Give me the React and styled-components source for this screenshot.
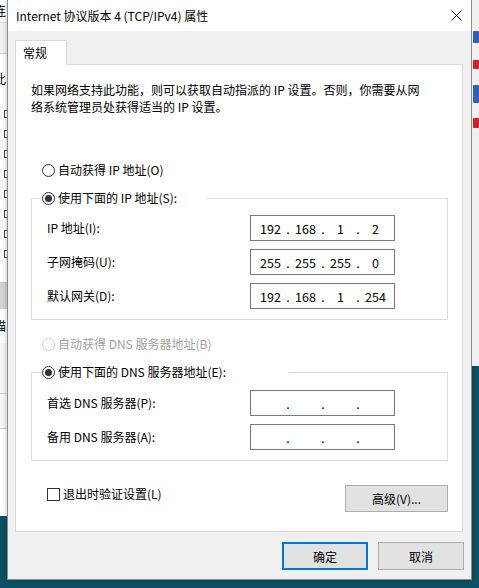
import React from 'react';
import styled, { createGlobalStyle } from 'styled-components';

const GlobalStyle = createGlobalStyle`
  html, body { margin: 0; padding: 0; }
  body {
    font-family: "Noto Sans CJK SC", "Noto Sans", sans-serif;
    font-size: 12px;
    color: #000;
  }
`;

const Desktop = styled.div`
  width: 479px;
  height: 588px;
  overflow: hidden;
  background: #0b5263;
  display: grid;
  grid-template-columns: 7px 465px 7px;
  grid-template-rows: 580px;
`;

const SideWindow = styled.div`
  height: ${p => p.$height}px;
  background: ${p => p.$bg};
  display: flex;
  flex-direction: column;
  overflow: hidden;
`;

const SideChar = styled.div`
  height: ${p => p.$h}px;
  line-height: ${p => p.$h}px;
  margin-left: -6px;
  border-bottom: ${p => (p.$line ? '1px solid #dadada' : 'none')};
`;

const SideBox = styled.div`
  width: 6px;
  height: 8px;
  margin: 6px 0 6px 4px;
  box-sizing: border-box;
  border: 1px solid #555;
  border-right: none;
`;

const SideBar = styled.div`
  height: ${p => p.$h}px;
  background: ${p => p.$bg};
  border-bottom: ${p => (p.$line ? '1px solid #cfcfcf' : 'none')};
`;

const SideIcon = styled.div`
  width: 6px;
  height: ${p => p.$h}px;
  margin: ${p => p.$m};
  background: ${p => p.$bg};
  border-radius: 1px;
`;

const Dialog = styled.div`
  display: flex;
  flex-direction: column;
  background: #f0f0f0;
  border: 1px solid #8c8c8c;
  border-top: none;
  box-sizing: border-box;
  box-shadow: 0 0 6px rgba(0, 0, 0, 0.25);
`;

const TitleBar = styled.div`
  height: 31px;
  flex: none;
  background: #fff;
  display: flex;
  align-items: center;
  justify-content: space-between;
  padding: 0 9px 0 8px;
`;

const Title = styled.span`
  font-size: 12px;
  line-height: 16px;
`;

const Body = styled.div`
  padding: 9px 8px 9px 7px;
  display: flex;
  flex-direction: column;
`;

const Tab = styled.div`
  position: relative;
  z-index: 1;
  width: 52px;
  height: 25px;
  box-sizing: border-box;
  margin-bottom: -1px;
  padding: 4px 0 0 7px;
  background: #fff;
  border: 1px solid #d9d9d9;
  border-bottom: none;
  line-height: 16px;
`;

const Panel = styled.div`
  height: 468px;
  box-sizing: border-box;
  background: #fff;
  border: 1px solid #d9d9d9;
  padding: 16px 14px 0 15px;
  display: flex;
  flex-direction: column;
`;

const Description = styled.p`
  margin: 0;
  line-height: 17px;
`;

const RadioRow = styled.label`
  display: flex;
  align-items: center;
  gap: 3px;
  height: 16px;
  line-height: 16px;
  margin: ${p => p.$mt}px 0 0 11px;
  color: ${p => (p.$disabled ? '#a0a0a0' : '#000')};
`;

const RadioCircle = styled.span`
  width: 13px;
  height: 13px;
  box-sizing: border-box;
  border-radius: 50%;
  border: 1px solid ${p => (p.$disabled ? '#cccccc' : '#333')};
  background: #fff;
  display: inline-flex;
  align-items: center;
  justify-content: center;
  &::after {
    content: '';
    width: 7px;
    height: 7px;
    border-radius: 50%;
    background: #333;
    display: ${p => (p.$checked ? 'block' : 'none')};
  }
`;

const Group = styled.fieldset`
  margin: 12px 0 0 0;
  padding: 0;
  border: 1px solid #dcdcdc;
  min-width: 0;
`;

const Legend = styled.legend`
  padding: 0;
  margin-left: 10px;
  width: ${p => p.$w}px;
`;

const LegendRadio = styled(RadioRow)`
  margin: 0;
`;

const FieldGrid = styled.div`
  display: grid;
  grid-template-columns: 203px 145px;
  grid-auto-rows: 26px;
  row-gap: 8px;
  align-items: center;
  padding: ${p => p.$pt}px 0 ${p => p.$pb}px 15px;
`;

const FieldLabel = styled.span`
  line-height: 16px;
`;

const IpField = styled.div`
  width: 145px;
  height: 26px;
  box-sizing: border-box;
  border: 1px solid #7a7a7a;
  background: #fff;
  display: flex;
  align-items: center;
  padding-left: 7px;
  font-size: 12.5px;
`;

const Octet = styled.span`
  width: 25px;
  text-align: center;
`;

const Dot = styled.span`
  width: 10px;
  text-align: center;
`;

const BottomRow = styled.div`
  margin-top: 24px;
  display: flex;
  justify-content: space-between;
  align-items: flex-start;
`;

const CheckRow = styled.label`
  display: flex;
  align-items: center;
  gap: 3px;
  margin: 1px 0 0 16px;
  line-height: 16px;
`;

const CheckBox = styled.span`
  width: 13px;
  height: 13px;
  box-sizing: border-box;
  border: 1px solid #333;
  background: #fff;
`;

const Button = styled.button`
  width: ${p => p.$w}px;
  height: ${p => p.$h}px;
  box-sizing: border-box;
  padding: 0;
  font: inherit;
  color: #000;
  background: #e1e1e1;
  border: ${p => (p.$primary ? '2px solid #0078d7' : '1px solid #adadad')};
`;

const Footer = styled.div`
  margin: 10px -1px 0 0;
  display: flex;
  justify-content: flex-end;
  gap: 10px;
`;

function Radio({ checked, disabled, children, mt }) {
  return (
    <RadioRow $mt={mt} $disabled={disabled}>
      <RadioCircle $checked={checked} $disabled={disabled} />
      {children}
    </RadioRow>
  );
}

function Ip({ value }) {
  const parts = value ? value.split('.') : ['', '', '', ''];
  return (
    <IpField>
      {parts.map((p, i) => (
        <React.Fragment key={i}>
          {i > 0 && <Dot>.</Dot>}
          <Octet>{p}</Octet>
        </React.Fragment>
      ))}
    </IpField>
  );
}

function CloseIcon() {
  return (
    <svg width="11" height="11" viewBox="0 0 11 11">
      <path d="M0.5 0.5 L10.5 10.5 M10.5 0.5 L0.5 10.5" stroke="#000" strokeWidth="1" fill="none" />
    </svg>
  );
}

export default function App() {
  return (
    <>
      <GlobalStyle />
      <Desktop>
        <SideWindow $height={516} $bg="#fff">
          <SideChar $h={22} $line>连</SideChar>
          <SideBar $h={30} $bg="#f3f3f3" $line />
          <SideChar $h={50}>此</SideChar>
          <SideBox />
          <SideBox />
          <SideBox />
          <SideBox />
          <SideBox />
          <SideBox />
          <SideBox />
          <SideBox />
          <SideBar $h={18} $bg="#fff" $line />
          <SideBar $h={26} $bg="#d4d4d4" />
          <SideChar $h={34}>描</SideChar>
          <SideBar $h={50} $bg="#f7f7f7" $line />
          <SideBar $h={34} $bg="#f7f7f7" $line />
        </SideWindow>
        <Dialog>
          <TitleBar>
            <Title>Internet 协议版本 4 (TCP/IPv4) 属性</Title>
            <CloseIcon />
          </TitleBar>
          <Body>
            <Tab>常规</Tab>
            <Panel>
              <Description>
                如果网络支持此功能，则可以获取自动指派的 IP 设置。否则，你需要从网
                <br />
                络系统管理员处获得适当的 IP 设置。
              </Description>

              <Radio mt={47}>自动获得 IP 地址(O)</Radio>
              <Group>
                <Legend $w={165}>
                  <LegendRadio>
                    <RadioCircle $checked />
                    使用下面的 IP 地址(S):
                  </LegendRadio>
                </Legend>
                <FieldGrid $pt={9} $pb={10}>
                  <FieldLabel>IP 地址(I):</FieldLabel>
                  <Ip value="192.168.1.2" />
                  <FieldLabel>子网掩码(U):</FieldLabel>
                  <Ip value="255.255.255.0" />
                  <FieldLabel>默认网关(D):</FieldLabel>
                  <Ip value="192.168.1.254" />
                </FieldGrid>
              </Group>

              <Radio mt={16} disabled>自动获得 DNS 服务器地址(B)</Radio>
              <Group>
                <Legend $w={247}>
                  <LegendRadio>
                    <RadioCircle $checked />
                    使用下面的 DNS 服务器地址(E):
                  </LegendRadio>
                </Legend>
                <FieldGrid $pt={10} $pb={10}>
                  <FieldLabel>首选 DNS 服务器(P):</FieldLabel>
                  <Ip />
                  <FieldLabel>备用 DNS 服务器(A):</FieldLabel>
                  <Ip />
                </FieldGrid>
              </Group>

              <BottomRow>
                <CheckRow>
                  <CheckBox />
                  退出时验证设置(L)
                </CheckRow>
                <Button $w={103} $h={27}>高级(V)...</Button>
              </BottomRow>
            </Panel>
            <Footer>
              <Button $w={86} $h={28} $primary>确定</Button>
              <Button $w={86} $h={28}>取消</Button>
            </Footer>
          </Body>
        </Dialog>
        <SideWindow $height={366} $bg="#f0f0f0">
          <SideIcon $h={12} $m="31px 0 0 1px" $bg="#2f5fb8" />
          <SideIcon $h={9} $m="17px 0 0 1px" $bg="#d21f2a" />
          <SideIcon $h={18} $m="16px 0 0 1px" $bg="#2f5fb8" />
          <SideIcon $h={10} $m="15px 0 0 1px" $bg="#d21f2a" />
        </SideWindow>
      </Desktop>
    </>
  );
}
